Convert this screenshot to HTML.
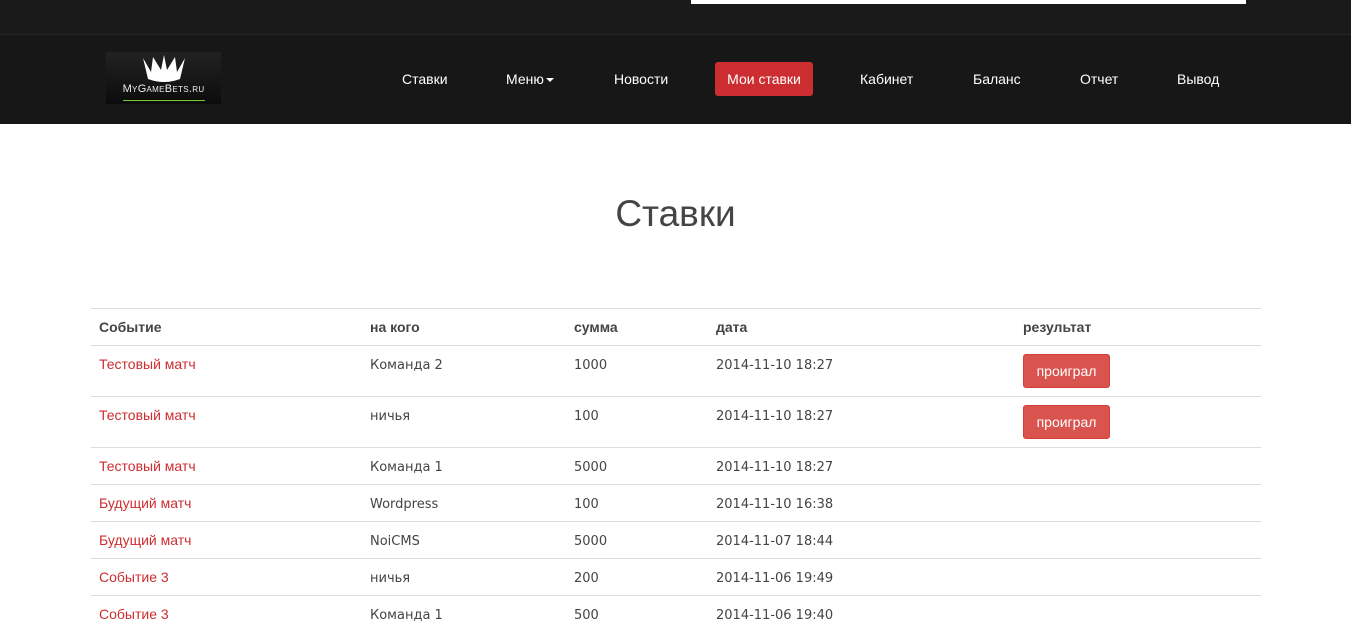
<!DOCTYPE html>
<html><head><meta charset="utf-8"><style>
*{margin:0;padding:0;box-sizing:border-box}
body{width:1351px;height:616px;overflow:hidden;background:#fff;font-family:"Liberation Sans",sans-serif;position:relative}
.top{position:absolute;left:0;top:0;width:1351px;height:35px;background:#1a1a1a;border-bottom:1px solid #262626}
.inp{position:absolute;left:691px;top:0;width:555px;height:4px;background:#fff}
.nav{position:absolute;left:0;top:35px;width:1351px;height:89px;background:#171717}
.logo{position:absolute;left:106px;top:52px;width:115px;height:52px;background:linear-gradient(#222,#0c0c0c)}
.logo span{position:absolute;left:0;width:115px;text-align:center;top:32px;color:#eee;font-size:11px;letter-spacing:0.3px;font-variant:small-caps;line-height:11px}
.logo .g{position:absolute;left:17px;top:48px;width:82px;height:1px;background:#7c3}
.n{position:absolute;top:71px;color:#fff;font-size:14px}
.act{position:absolute;left:715px;top:62px;width:98px;height:34px;background:#cc2d30;border-radius:3px;color:#fff;font-size:14px;text-align:center;line-height:34px}
h1{position:absolute;left:0;width:1351px;top:193px;text-align:center;font-weight:normal;font-size:37px;color:#444}
table{position:absolute;left:91px;top:308px;width:1170px;border-collapse:collapse;font-size:14px;color:#444}
td,th{text-align:left;border-top:1px solid #ddd;vertical-align:top;line-height:20px}
th{border-bottom:1px solid #ddd;font-weight:bold;padding:8px}
td{font-family:"DejaVu Sans",sans-serif;font-size:13px;padding:10px 8px 6px}
td.f,td.r{padding:8px}
td a{display:block;font-family:"Liberation Sans",sans-serif;font-size:14px;line-height:20px;color:#cc2d30;text-decoration:none}
tr.t td{height:50px}
.b{display:block;width:87px;text-align:center;background:#d9534f;border:1px solid #d43f3a;border-radius:3px;color:#fff;font-family:"Liberation Sans",sans-serif;font-size:14px;padding:6px 0;line-height:20px}
</style></head><body>
<div class="top"><div class="inp"></div></div>
<div class="nav"></div>
<div class="logo">
<svg width="115" height="32" style="position:absolute;left:0;top:0"><path d="M37 6 L45 20 L47 5 L55 18 L58 3 L61 18 L69 5 L71 20 L79 6 L74 27 Q58 33 42 27 Z" fill="#fff"/></svg>
<span>MyGameBets.ru</span><div class="g"></div></div>
<div class="n" style="left:402px">Ставки</div>
<div class="n" style="left:506px">Меню<span style="display:inline-block;border-left:4px solid transparent;border-right:4px solid transparent;border-top:4px solid #fff;vertical-align:middle;margin-left:2px"></span></div>
<div class="n" style="left:614px">Новости</div>
<div class="act">Мои ставки</div>
<div class="n" style="left:860px">Кабинет</div>
<div class="n" style="left:973px">Баланс</div>
<div class="n" style="left:1080px">Отчет</div>
<div class="n" style="left:1177px">Вывод</div>
<h1>Ставки</h1>
<table>
<tr><th style="width:271px">Событие</th><th style="width:204px">на кого</th><th style="width:142px">сумма</th><th style="width:307px">дата</th><th>результат</th></tr>
<tr class="t"><td class="f"><a>Тестовый матч</a></td><td>Команда 2</td><td>1000</td><td>2014-11-10 18:27</td><td class="r"><span class="b">проиграл</span></td></tr>
<tr class="t"><td class="f"><a>Тестовый матч</a></td><td>ничья</td><td>100</td><td>2014-11-10 18:27</td><td class="r"><span class="b">проиграл</span></td></tr>
<tr><td class="f"><a>Тестовый матч</a></td><td>Команда 1</td><td>5000</td><td>2014-11-10 18:27</td><td class="r"></td></tr>
<tr><td class="f"><a>Будущий матч</a></td><td>Wordpress</td><td>100</td><td>2014-11-10 16:38</td><td class="r"></td></tr>
<tr><td class="f"><a>Будущий матч</a></td><td>NoiCMS</td><td>5000</td><td>2014-11-07 18:44</td><td class="r"></td></tr>
<tr><td class="f"><a>Событие 3</a></td><td>ничья</td><td>200</td><td>2014-11-06 19:49</td><td class="r"></td></tr>
<tr><td class="f"><a>Событие 3</a></td><td>Команда 1</td><td>500</td><td>2014-11-06 19:40</td><td class="r"></td></tr>
</table>
</body></html>
